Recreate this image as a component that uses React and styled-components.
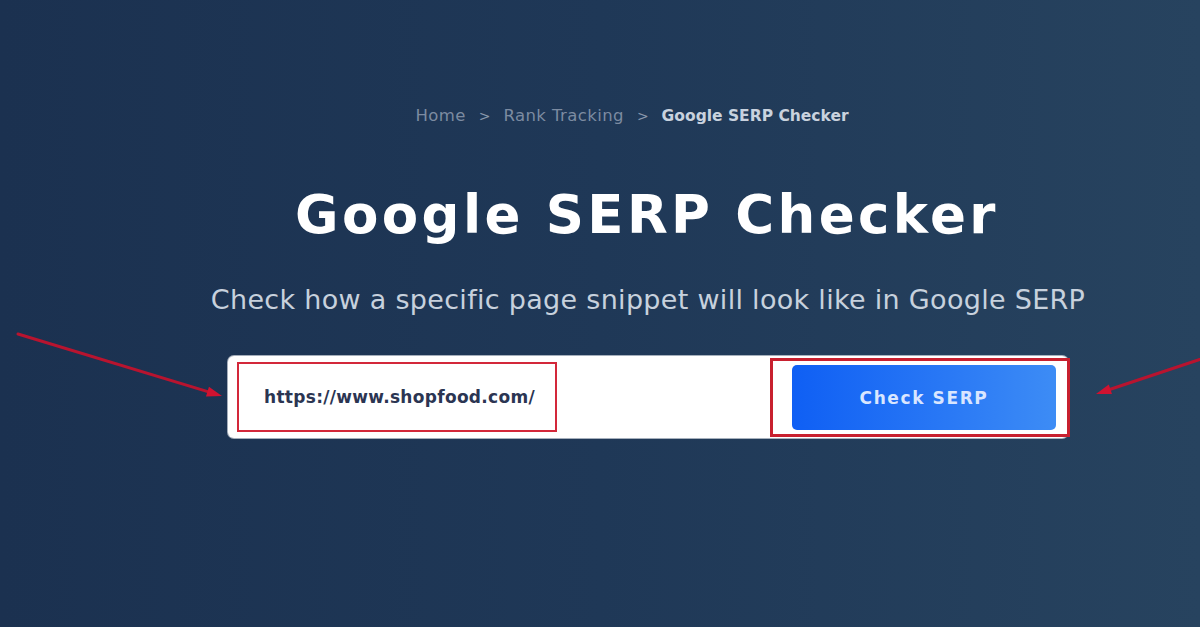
import React from "react";
import styled, { createGlobalStyle } from "styled-components";

const GlobalStyle = createGlobalStyle`
  html, body {
    margin: 0;
    padding: 0;
  }
  body {
    font-family: "DejaVu Sans", "Open Sans", sans-serif;
  }
`;

// Layout
const Page = styled.div`
  position: relative;
  width: 1200px;
  height: 627px;
  overflow: hidden;
  background: linear-gradient(90deg, #1b3150 0%, #1f3857 50%, #27435f 100%);
  display: flex;
  flex-direction: column;
  align-items: center;
  padding: 106px 0 0 96px;
  box-sizing: border-box;
`;

const Breadcrumbs = styled.nav`
  display: flex;
  align-items: center;
  gap: 13px;
  color: #7c8ba1;
  margin-left: -32px;
`;

const Crumb = styled.span`
  color: ${(p) => (p.$current ? "#c9d2de" : "#7c8ba1")};
  font-weight: ${(p) => (p.$current ? 700 : 400)};
  font-size: ${(p) => (p.$current ? "15.5px" : "16.5px")};
  letter-spacing: ${(p) => (p.$current ? "0" : "0.4px")};
`;

const Sep = styled.span`
  font-size: 14px;
  color: #8a98ac;
`;

const Title = styled.h1`
  margin: 60px 0 0 0;
  font-size: 53px;
  line-height: 60px;
  font-weight: 700;
  color: #ffffff;
  letter-spacing: 3.4px;
  margin-left: -2px;
`;

const Subtitle = styled.p`
  margin: 38px 0 0 0;
  font-size: 27px;
  line-height: 34px;
  color: #c7d1dd;
  letter-spacing: 0.3px;
`;

const SearchBox = styled.div`
  margin-top: 39px;
  width: 840px;
  height: 82px;
  box-sizing: border-box;
  background: #ffffff;
  border-radius: 6px;
  display: flex;
  align-items: flex-start;
  padding: 6px 0 0 9px;
  box-shadow: 0 0 0 1px rgba(255, 255, 255, 0.6);
`;

const UrlField = styled.div`
  width: 320px;
  height: 70px;
  box-sizing: border-box;
  border: 2px solid #d3283a;
  display: flex;
  align-items: center;
  padding-left: 25px;
  font-size: 17px;
  font-weight: 600;
  color: #2b3552;
  letter-spacing: 0.3px;
`;

const Spacer = styled.div`
  flex: 1;
`;

const ButtonFrame = styled.div`
  margin-top: -4px;
  margin-right: -2px;
  width: 300px;
  height: 79px;
  box-sizing: border-box;
  border: 3px solid #c8202f;
  padding: 4px 11px 4px 19px;
  display: flex;
`;

const CheckButton = styled.button`
  flex: 1;
  border: none;
  border-radius: 5px;
  background: linear-gradient(90deg, #0f5ff4 0%, #2a79f5 60%, #3d8cf5 100%);
  color: #d9e6ff;
  font-family: "DejaVu Sans", sans-serif;
  font-size: 17px;
  font-weight: 700;
  letter-spacing: 1.6px;
  cursor: pointer;
`;

const Annotations = styled.svg`
  position: absolute;
  left: 0;
  top: 0;
  pointer-events: none;
`;

const Arrow = ({ x1, y1, x2, y2 }) => {
  const angle = Math.atan2(y2 - y1, x2 - x1);
  const len = 16;
  const spread = 0.32;
  const ax = x2 - len * Math.cos(angle - spread);
  const ay = y2 - len * Math.sin(angle - spread);
  const bx = x2 - len * Math.cos(angle + spread);
  const by = y2 - len * Math.sin(angle + spread);
  return (
    <g>
      <line
        x1={x1}
        y1={y1}
        x2={x2 - 8 * Math.cos(angle)}
        y2={y2 - 8 * Math.sin(angle)}
        stroke="#b8142f"
        strokeWidth="3"
        strokeLinecap="round"
      />
      <polygon points={`${x2},${y2} ${ax},${ay} ${bx},${by}`} fill="#d01230" />
    </g>
  );
};

export default function App() {
  return (
    <>
      <GlobalStyle />
      <Page>
        <Breadcrumbs>
          <Crumb>Home</Crumb>
          <Sep>&gt;</Sep>
          <Crumb>Rank Tracking</Crumb>
          <Sep>&gt;</Sep>
          <Crumb $current>Google SERP Checker</Crumb>
        </Breadcrumbs>

        <Title>Google SERP Checker</Title>
        <Subtitle>
          Check how a specific page snippet will look like in Google SERP
        </Subtitle>

        <SearchBox>
          <UrlField>https://www.shopfood.com/</UrlField>
          <Spacer />
          <ButtonFrame>
            <CheckButton>Check SERP</CheckButton>
          </ButtonFrame>
        </SearchBox>

        <Annotations width="1200" height="627" viewBox="0 0 1200 627">
          <Arrow x1={18} y1={334} x2={222} y2={396} />
          <Arrow x1={1210} y1={356} x2={1096} y2={394} />
        </Annotations>
      </Page>
    </>
  );
}
